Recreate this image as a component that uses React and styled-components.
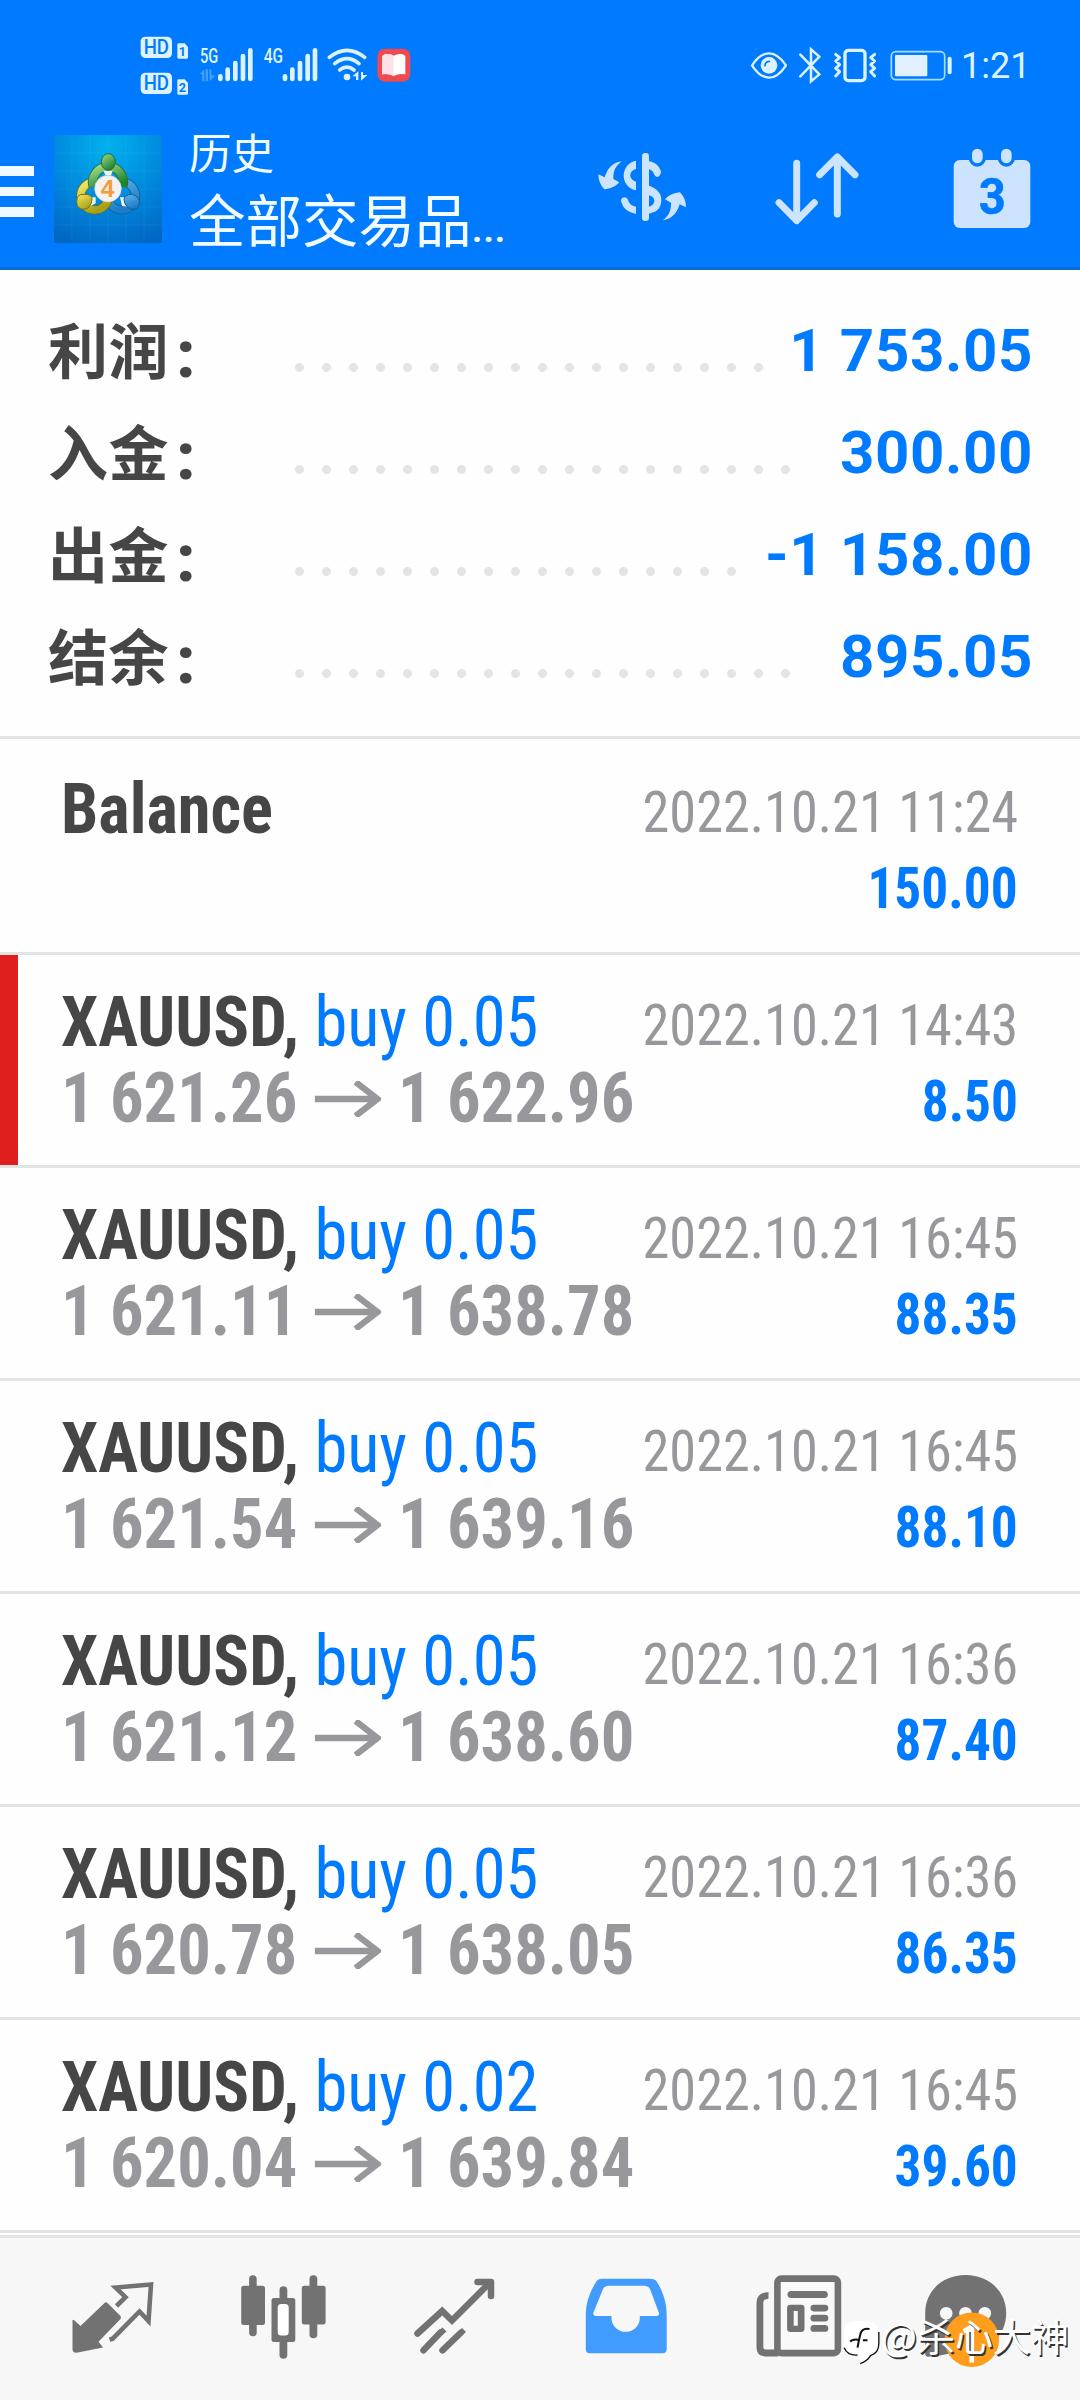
import React from 'react';
import styled, { createGlobalStyle, css } from 'styled-components';

const GlobalStyle = createGlobalStyle`
  body {
    margin: 0;
    background: #fff;
    font-family: Roboto, 'Noto Sans CJK SC', sans-serif;
  }
`;

const Screen = styled.div`
  position: relative;
  width: 1080px;
  height: 2400px;
  display: flex;
  flex-direction: column;
  overflow: hidden;
  background: #fefefe;
`;

const Header = styled.header`
  box-sizing: border-box;
  height: 270px;
  background: #007aff;
  border-bottom: 3px solid #0a6cdb;
`;

const StatusBar = styled.div`
  box-sizing: border-box;
  height: 100px;
  padding: 30px 54px 0 140px;
  display: flex;
  justify-content: space-between;
`;

const StatusGroup = styled.div`
  display: flex;
  gap: ${props => props.$gap}px;
`;

const StatusIcon = styled.svg`
  display: block;
  height: 70px;
  width: ${props => props.$width}px;
  fill: #dcf3ff;
  stroke: none;
`;

const Clock = styled.span`
  font-size: 36px;
  line-height: 73px;
  color: #dcf3ff;
  width: 65px;
  margin-left: -4px;
  white-space: nowrap;
`;

const TitleBar = styled.div`
  height: 167px;
  display: flex;
  align-items: flex-start;
`;

const MenuButton = styled.div`
  width: 34px;
  margin-top: 66px;
  display: flex;
  flex-direction: column;
  gap: 11px;
`;

const MenuLine = styled.span`
  height: 9.5px;
  background: #f0f9ff;
`;

const Logo = styled.svg`
  width: 108px;
  height: 108px;
  margin: 35px 0 0 20px;
`;

const Titles = styled.div`
  margin: 23px 0 0 27px;
  color: #f2fbff;
  font-family: 'Noto Sans CJK SC', sans-serif;
`;

const Title = styled.div`
  font-size: 42.5px;
  line-height: 56px;
`;

const Subtitle = styled.div`
  margin-top: -2px;
  font-size: 56.5px;
  line-height: 80px;
  white-space: nowrap;
`;

const Ellipsis = styled.span`
  font-family: Roboto, sans-serif;
  font-size: 41px;
  font-weight: 500;
`;

const Actions = styled.div`
  margin: 47px 49px 0 auto;
  display: flex;
`;

const ActionIcon = styled.svg`
  display: block;
  height: 83.3px;
  width: ${props => props.$width}px;
  margin-left: ${props => props.$space || 0}px;
  fill: #cce4ff;
`;

const Summary = styled.section`
  box-sizing: border-box;
  height: 469px;
  padding: 30px 47px 0 48px;
  border-bottom: 3px solid #e3e3e3;
`;

const SummaryRow = styled.div`
  height: 102px;
  display: flex;
  align-items: center;
`;

const SummaryLabel = styled.span`
  width: 247px;
  margin-top: -6px;
  font-family: 'Noto Sans CJK SC', sans-serif;
  font-size: 60px;
  font-weight: 700;
  line-height: 102px;
  letter-spacing: 0.6px;
  color: #464646;
`;

const Colon = styled.span`
  font-family: Roboto, sans-serif;
  font-size: 64px;
  font-weight: 900;
  line-height: 1;
  margin-left: 7px;
  vertical-align: -3px;
`;

const Leader = styled.span`
  height: 9px;
  width: ${props => props.$dots * 27}px;
  margin-top: 33px;
  background: radial-gradient(circle at 4.5px 4.5px, #e4e4e4 4px, transparent 4.9px) 0 0 / 27px 9px;
`;

const SummaryValue = styled.span`
  margin-left: auto;
  font-size: 60px;
  font-weight: 700;
  line-height: 102px;
  letter-spacing: 0.6px;
  color: #007aff;
`;

const condensed = css`
  font-family: 'Roboto Condensed', Roboto, sans-serif;
  font-stretch: 75%;
  line-height: 76px;
  white-space: nowrap;
`;

const Deal = styled.article`
  box-sizing: border-box;
  height: ${props => (props.$balance ? 216 : 213)}px;
  padding: ${props => (props.$balance ? 32 : 29)}px 62px 0 61px;
  border-bottom: 3px solid #e3e3e3;
  display: flex;
  justify-content: space-between;
  ${props => props.$marked && css`
    background: linear-gradient(#e01e1e, #e01e1e) 0 0 / 18px 210px no-repeat;
  `}
`;

const DealInfo = styled.div`
  ${condensed}
  flex: 0 0 560px;
  min-width: 0;
  font-size: 70px;
  transform: scaleX(0.95);
  transform-origin: left;
`;

const DealSymbol = styled.div`
  height: 76px;
  font-weight: 700;
  color: #464646;
`;

const DealType = styled.span`
  font-weight: 430;
  color: #007aff;
`;

const DealPrices = styled.div`
  height: 76px;
  display: flex;
  align-items: center;
  font-weight: 700;
  color: #98989c;
`;

const PriceArrow = styled.svg`
  flex: none;
  width: 70px;
  height: 36px;
  margin: 1px 18px 0;
`;

const DealSide = styled.div`
  ${condensed}
  flex: 0 0 390px;
  min-width: 0;
  padding-top: 4px;
  font-size: 57px;
  display: flex;
  flex-direction: column;
  align-items: flex-end;
`;

const DealDate = styled.div`
  height: 76px;
  font-weight: 430;
  color: #98989c;
  transform: scaleX(0.953);
  transform-origin: right;
`;

const DealProfit = styled.div`
  height: 76px;
  font-weight: 700;
  color: #007aff;
  transform: scaleX(0.935);
  transform-origin: right;
`;

const NavBar = styled.nav`
  box-sizing: border-box;
  height: 165px;
  margin-top: 2px;
  padding: 27px 27px 0;
  border-top: 3px solid #e3e3e3;
  background: #f7f7f7;
  display: grid;
  grid-template-columns: repeat(6, 171px);
  justify-items: center;
`;

const NavIcon = styled.svg`
  display: block;
  width: 90px;
  height: 100px;
  overflow: visible;
  fill: ${props => (props.$active ? '#429bff' : '#727272')};
`;

const Watermark = styled.div`
  position: absolute;
  left: 843px;
  top: 2310px;
  height: 50px;
  display: flex;
  align-items: center;
  font-family: 'Noto Sans CJK SC', sans-serif;
  font-size: 38px;
  font-weight: 400;
  line-height: 50px;
  color: #fff;
  text-shadow: 1.5px 1.5px 0 #333;
  white-space: nowrap;
`;

const WatermarkLogo = styled.svg`
  width: 37px;
  height: 46px;
  margin: 13px 1px 0 0;
`;

const summary = [
  { label: '利润', value: '1 753.05', dots: 18 },
  { label: '入金', value: '300.00', dots: 19 },
  { label: '出金', value: '-1 158.00', dots: 17 },
  { label: '结余', value: '895.05', dots: 19 },
];

const deals = [
  { balance: true, symbol: 'Balance', date: '2022.10.21 11:24', profit: '150.00' },
  { marked: true, symbol: 'XAUUSD,', type: 'buy 0.05', open: '1 621.26', close: '1 622.96', date: '2022.10.21 14:43', profit: '8.50' },
  { symbol: 'XAUUSD,', type: 'buy 0.05', open: '1 621.11', close: '1 638.78', date: '2022.10.21 16:45', profit: '88.35' },
  { symbol: 'XAUUSD,', type: 'buy 0.05', open: '1 621.54', close: '1 639.16', date: '2022.10.21 16:45', profit: '88.10' },
  { symbol: 'XAUUSD,', type: 'buy 0.05', open: '1 621.12', close: '1 638.60', date: '2022.10.21 16:36', profit: '87.40' },
  { symbol: 'XAUUSD,', type: 'buy 0.05', open: '1 620.78', close: '1 638.05', date: '2022.10.21 16:36', profit: '86.35' },
  { symbol: 'XAUUSD,', type: 'buy 0.02', open: '1 620.04', close: '1 639.84', date: '2022.10.21 16:45', profit: '39.60' },
];

const Hd = ({ y, sim }) => (
  <g transform={`translate(0 ${y})`}>
    <rect x="62" y="0" width="94" height="64" rx="14" />
    <text x="109" y="53" textAnchor="middle" fontSize="60" fontWeight="500" textLength="76" lengthAdjust="spacingAndGlyphs" fill="#007aff">HD</text>
    <path d="M172 24 Q172 20 176 20 H194 L204 31 V62 Q204 66 200 66 H176 Q172 66 172 62Z" />
    <text x="187" y="59" textAnchor="middle" fontSize="38" fontWeight="700" fill="#007aff">{sim}</text>
  </g>
);

const Signal = ({ x }) => (
  <g transform={`translate(${x} 0)`}>
    <rect x="0" y="162" width="14" height="22" rx="7" />
    <rect x="22" y="142" width="14" height="42" rx="7" />
    <rect x="45" y="122" width="14" height="62" rx="7" />
    <rect x="68" y="101" width="14" height="83" rx="7" />
    <rect x="90" y="84" width="14" height="100" rx="7" />
  </g>
);

const StatusIcons = () => (
  <StatusBar>
    <StatusGroup $gap={9}>
      <StatusIcon $width={48} viewBox="60 30 144 210">
        <Hd y={50} sim="1" />
        <Hd y={158} sim="2" />
      </StatusIcon>
      <StatusIcon $width={56} viewBox="232 30 168 210">
        <text x="241" y="129" fontSize="62" fontWeight="500" textLength="55" lengthAdjust="spacingAndGlyphs">5G</text>
        <path opacity="0.3" d="M240 162 L254 148 V184 H247 V162Z M258 148 H265 V184 H258Z M269 148 H275 V166 H288 L270 184Z" />
        <Signal x={295} />
      </StatusIcon>
      <StatusIcon $width={56} viewBox="428 30 168 210">
        <text x="433" y="129" fontSize="62" fontWeight="500" textLength="58" lengthAdjust="spacingAndGlyphs">4G</text>
        <Signal x={490} />
      </StatusIcon>
      <StatusIcon $width={41} viewBox="622 30 123 210">
        <g fill="none" stroke="#dcf3ff" strokeWidth="11" strokeLinecap="round">
          <path d="M629 112 Q682 70 735 112" />
          <path d="M645 131 Q682 101 718 131" />
          <path d="M660 150 Q682 133 703 150" />
        </g>
        <circle cx="682" cy="171" r="10" />
        <path d="M698 169 L716 154 V180 H709 V169Z M724 156 H730 V165 H743 L724 182Z" />
      </StatusIcon>
      <StatusIcon $width={34} viewBox="770 30 102 210">
        <rect x="771" y="86" width="99" height="99" rx="22" fill="#ee4a52" />
        <path d="M786 108 L794 103 Q810 100 820 107 Q832 100 847 103 L855 108 V163 Q835 160 820 168 Q805 160 786 163Z" fill="#fff" />
        <path d="M786 108 L794 103 Q810 100 820 107 V168 Q805 160 786 163Z" fill="#ffe1ea" />
      </StatusIcon>
    </StatusGroup>
    <StatusGroup $gap={12}>
      <StatusIcon $width={36} viewBox="66 0 108 210">
        <path d="M69 106 Q93 70 120 70 Q147 70 171 106 Q147 143 120 143 Q93 143 69 106Z" fill="none" stroke="#dcf3ff" strokeWidth="7" />
        <circle cx="120" cy="106" r="25" />
        <path d="M108 107 Q108 95 121 94" fill="none" stroke="#007aff" strokeWidth="5" strokeLinecap="round" />
      </StatusIcon>
      <StatusIcon $width={22} viewBox="208 0 66 210">
        <path d="M212 74 L269 133 L244 154 V58 L269 80 L212 139" fill="none" stroke="#dcf3ff" strokeWidth="7.5" strokeLinecap="round" />
      </StatusIcon>
      <StatusIcon $width={44} viewBox="306 0 132 210">
        <rect x="342" y="61" width="60" height="91" rx="10" fill="none" stroke="#dcf3ff" strokeWidth="10" />
        <path d="M314 73 L326 83 L314 93 L326 104 L314 115 L326 125 L314 138 M431 73 L419 83 L431 93 L419 104 L431 115 L419 125 L431 138" fill="none" stroke="#dcf3ff" strokeWidth="8.5" strokeLinecap="round" strokeLinejoin="round" />
      </StatusIcon>
      <StatusIcon $width={64} viewBox="476 0 192 210">
        <rect x="483" y="65" width="160" height="84" rx="13" fill="none" stroke="#a8dcff" strokeWidth="5" />
        <rect x="494" y="75" width="97" height="64" rx="3" fill="#e2f1ff" />
        <rect x="652" y="80" width="12" height="53" rx="6" />
      </StatusIcon>
      <Clock>1:21</Clock>
    </StatusGroup>
  </StatusBar>
);

const MetaLogo = () => (
  <Logo viewBox="12 15 324 324">
    <defs>
      <radialGradient id="sky" cx="0.5" cy="0.1" r="0.95">
        <stop offset="0" stopColor="#00b1ee" />
        <stop offset="0.55" stopColor="#0088dd" />
        <stop offset="1" stopColor="#0068c4" />
      </radialGradient>
      <linearGradient id="green" x1="0" y1="0" x2="0.6" y2="1">
        <stop offset="0" stopColor="#a4dc8c" />
        <stop offset="1" stopColor="#1c8430" />
      </linearGradient>
      <linearGradient id="yellow" x1="0" y1="0" x2="0.6" y2="1">
        <stop offset="0" stopColor="#f3ea66" />
        <stop offset="1" stopColor="#a9a016" />
      </linearGradient>
      <linearGradient id="blue" x1="0" y1="0" x2="0.4" y2="1">
        <stop offset="0" stopColor="#5fb4e8" />
        <stop offset="1" stopColor="#1b7cc8" />
      </linearGradient>
    </defs>
    <rect x="12" y="15" width="324" height="324" fill="url(#sky)" />
    <path d="M66 15V339 M120 15V339 M174 15V339 M228 15V339 M282 15V339 M12 69H336 M12 123H336 M12 177H336 M12 231H336 M12 285H336" stroke="#fff" strokeOpacity="0.05" strokeWidth="3" />
    <circle cx="215" cy="198" r="42" fill="none" stroke="#135c8e" strokeWidth="27" />
    <circle cx="215" cy="198" r="42" fill="none" stroke="url(#blue)" strokeWidth="22" />
    <circle cx="134" cy="198" r="42" fill="none" stroke="#6c711c" strokeWidth="27" />
    <circle cx="134" cy="198" r="42" fill="none" stroke="url(#yellow)" strokeWidth="22" />
    <path d="M130 170 A46 46 0 1 1 218 170" fill="none" stroke="#246c35" strokeWidth="29" />
    <path d="M130 170 A46 46 0 1 1 218 170" fill="none" stroke="url(#green)" strokeWidth="24" />
    <path d="M160 122 H188 L183 136 H167Z M124 202 L137 202 V220 L116 232Z M210 202 H224 L236 230 L216 228Z" fill="#eef7ee" />
    <ellipse cx="175" cy="96" rx="21" ry="25" fill="url(#green)" stroke="#246c35" strokeWidth="3" />
    <path d="M80 214 Q80 191 103 193 Q128 192 126 210 Q122 237 101 238 Q80 238 80 214Z" fill="url(#yellow)" stroke="#6c711c" strokeWidth="3" />
    <path d="M222 209 Q223 192 247 193 Q271 200 268 222 Q266 239 246 238 Q224 232 222 209Z" fill="url(#blue)" stroke="#135c8e" strokeWidth="3" />
    <circle cx="174" cy="176" r="40" fill="#f3f2f1" stroke="#cfcfcf" strokeWidth="2" />
    <text x="173" y="201" textAnchor="middle" fontFamily="Liberation Sans, sans-serif" fontSize="74" fontWeight="700" fill="#f59b3c">4</text>
  </Logo>
);

const HeaderActions = () => (
  <Actions>
    <ActionIcon $width={88} viewBox="114 80 264 250">
      <rect x="246" y="98" width="21" height="204" rx="10" />
      <path id="swoosh" d="M185 123 C165 138 159 155 160 176 L178 186 C166 200 150 205 133 207 C121 195 115 180 115 162 L134 171 C140 148 157 126 185 123Z" />
      <use href="#swoosh" transform="rotate(180 246.5 211.5)" />
      <path d="M228 121 V146 C205 152 205 177 228 184 V210 C179 200 179 131 228 121Z" />
      <path d="M228 281 V259 Q207 254 204 238 Q199 228 188 232 Q181 236 184 246 Q193 275 228 281Z" />
      <path d="M262 121 Q295 125 303 153 Q303 166 293 170 Q285 170 281 159 Q278 148 262 145Z" />
      <path d="M262 194 Q304 208 304 238 Q304 276 262 280 V260 Q283 256 283 241 Q283 228 262 224Z" />
    </ActionIcon>
    <ActionIcon $width={84} $space={89} viewBox="645 80 252 250">
      <path d="M710 129 V300 M657 247 L710 301 L763 247 M832 281 V111 M779 163 L832 110 L885 163" fill="none" stroke="#cce4ff" strokeWidth="21" strokeLinecap="round" strokeLinejoin="round" />
    </ActionIcon>
    <ActionIcon $width={78} $space={94} viewBox="1179 80 234 250">
      <rect x="1181" y="119" width="230" height="204" rx="18" />
      <g stroke="#007aff" strokeWidth="20" paintOrder="stroke">
        <rect x="1236" y="85" width="32" height="44" rx="16" />
        <rect x="1323" y="85" width="32" height="44" rx="16" />
      </g>
      <text x="1297" y="281" textAnchor="middle" fontSize="149" fontWeight="700" textLength="80" lengthAdjust="spacingAndGlyphs" fill="#007aff" stroke="#007aff" strokeWidth="2">3</text>
    </ActionIcon>
  </Actions>
);

const NavIcons = () => (
  <NavBar>
    <NavIcon viewBox="67.5 65 90 100">
      <path d="M72 121 Q72 119 74 120.5 L80 126 L104 103 Q105.5 101.5 107 103 L120 116 Q121 117.5 120 119 L98 141.7 L102.6 147.5 L76 152.8 Q72 153 72 149Z" />
      <path d="M116 106 L125 97.2 L115 87.5 L150.5 84.5 L148 121 L139 111.5 L112 138.8 L109 139.5" fill="none" stroke="#727272" strokeWidth="4.6" />
    </NavIcon>
    <NavIcon viewBox="238.5 65 90 100">
      <rect x="248.6" y="75.3" width="7.6" height="61" rx="3.8" />
      <rect x="240.7" y="85.7" width="23.8" height="39.3" rx="2.5" />
      <rect x="279" y="86.3" width="7.8" height="72.4" rx="3.8" />
      <rect x="271" y="98" width="23.8" height="44" rx="2.5" />
      <rect x="277.2" y="104" width="11" height="31.5" rx="3.5" fill="#fff" />
      <rect x="309" y="75.3" width="7.8" height="63" rx="3.8" />
      <rect x="301.3" y="85.7" width="23.8" height="38.8" rx="2.5" />
    </NavIcon>
    <NavIcon viewBox="409.5 65 90 100">
      <g fill="none" stroke="#727272" strokeWidth="6.5" strokeLinecap="round">
        <path d="M417 133.5 L441.7 111 L451.5 120.5 L489 83" />
        <path d="M477 82 H490.5 V96" strokeLinejoin="round" />
        <path d="M423 150.3 L440 132.5 M442 150.3 L460 133" />
      </g>
      <path d="M438 131 L442 127.5 L446 131.5 L442 135Z M457.5 131.5 L461.5 128 L465.5 132 L461 136Z" />
    </NavIcon>
    <NavIcon $active viewBox="41 65 90 100">
      <path fillRule="evenodd" d="M62 78.7 H110 Q115 78.7 117 82 C123 92 126.7 102 126.7 116 V149 Q126.7 153.3 122.5 153.3 H50 Q45.8 153.3 45.8 149 V116 C45.8 102 50 92 56 82 Q58 78.7 62 78.7Z M68 85.7 Q64.5 86 63 89 L53.3 113 Q53 116 56 116 H71.5 V119 A14.2 14 0 0 0 99.8 119 V116 H116 Q119.5 116 119 113 L110 89 Q108.5 86 104.5 85.7Z" />
    </NavIcon>
    <NavIcon viewBox="211.5 65 90 100">
      <path d="M228 95.7 Q219.4 95.5 219.4 103 V147 Q219.4 153 225 153 H238" fill="none" stroke="#727272" strokeWidth="6.8" />
      <rect x="236.9" y="78.6" width="60.5" height="74.5" rx="4" fill="#f9f9f9" stroke="#727272" strokeWidth="6.6" />
      <rect x="247" y="91" width="40.3" height="7" rx="3.5" />
      <path fillRule="evenodd" d="M250 104.7 H260.6 Q264 104.7 264 108 V128.5 Q264 132 260.6 132 H250 Q246.6 132 246.6 128.5 V108 Q246.6 104.7 250 104.7Z M253.2 111 V125.7 H257.3 V111Z" />
      <rect x="270" y="104.7" width="17.8" height="6.7" rx="3.3" />
      <rect x="270" y="114.8" width="17.8" height="6.7" rx="3.3" />
      <rect x="270" y="124.9" width="17.8" height="6.9" rx="3.4" />
    </NavIcon>
    <NavIcon viewBox="922.5 65 90 100">
      <path d="M924.7 113 C924.7 91 942 75 965 75 C988 75 1005.7 91 1005.7 113 C1005.7 136 988 151 967 151 C955 151 945 156 927 156.7 Q924.7 156.5 924.7 154Z" />
      <g fill="#f7f7f7">
        <circle cx="945.7" cy="113.3" r="6.3" />
        <circle cx="965" cy="113.3" r="6.3" />
        <circle cx="984.3" cy="113.3" r="6.3" />
      </g>
      <circle cx="971.3" cy="139.8" r="27.3" fill="#ff9d1c" />
      <path d="M963 131.5 L971.3 126.5 V162.5" fill="none" stroke="#fff" strokeWidth="4.6" />
    </NavIcon>
  </NavBar>
);

const DealRow = ({ deal }) => (
  <Deal $balance={deal.balance} $marked={deal.marked}>
    <DealInfo>
      <DealSymbol>
        {deal.symbol} {deal.type && <DealType>{deal.type}</DealType>}
      </DealSymbol>
      {deal.open && (
        <DealPrices>
          {deal.open}
          <PriceArrow viewBox="0 0 70 36">
            <path d="M0 18 H65 M43 1 L66 18 L43 35" fill="none" stroke="#98989c" strokeWidth="6.5" />
          </PriceArrow>
          {deal.close}
        </DealPrices>
      )}
    </DealInfo>
    <DealSide>
      <DealDate>{deal.date}</DealDate>
      <DealProfit>{deal.profit}</DealProfit>
    </DealSide>
  </Deal>
);

const App = () => (
  <Screen>
    <GlobalStyle />
    <Header>
      <StatusIcons />
      <TitleBar>
        <MenuButton>
          <MenuLine />
          <MenuLine />
          <MenuLine />
        </MenuButton>
        <MetaLogo />
        <Titles>
          <Title>历史</Title>
          <Subtitle>全部交易品<Ellipsis>...</Ellipsis></Subtitle>
        </Titles>
        <HeaderActions />
      </TitleBar>
    </Header>

    <Summary>
      {summary.map(row => (
        <SummaryRow key={row.label}>
          <SummaryLabel>{row.label}<Colon>:</Colon></SummaryLabel>
          <Leader $dots={row.dots} />
          <SummaryValue>{row.value}</SummaryValue>
        </SummaryRow>
      ))}
    </Summary>

    {deals.map((deal, i) => <DealRow key={i} deal={deal} />)}

    <NavIcons />

    <Watermark>
      <WatermarkLogo viewBox="38 176 108 138">
        <path d="M70 182 H112 Q142 184 142 215 V250 Q142 275 118 284 Q110 300 88 308 Q86 298 84 284 Q50 286 38 258 Q44 240 38 222 Q36 186 70 182Z" fill="#fff" />
        <path d="M144 215 V250 Q144 277 119 286 Q110 302 88 310 M40 262 Q50 286 80 284" fill="none" stroke="#111" strokeWidth="4" />
        <path d="M116 206 Q92 202 88 224 Q84 240 80 262 M58 244 Q64 236 82 238 M96 240 H110" fill="none" stroke="#111" strokeWidth="6" />
      </WatermarkLogo>
      @杀心大神
    </Watermark>
  </Screen>
);

export default App;
